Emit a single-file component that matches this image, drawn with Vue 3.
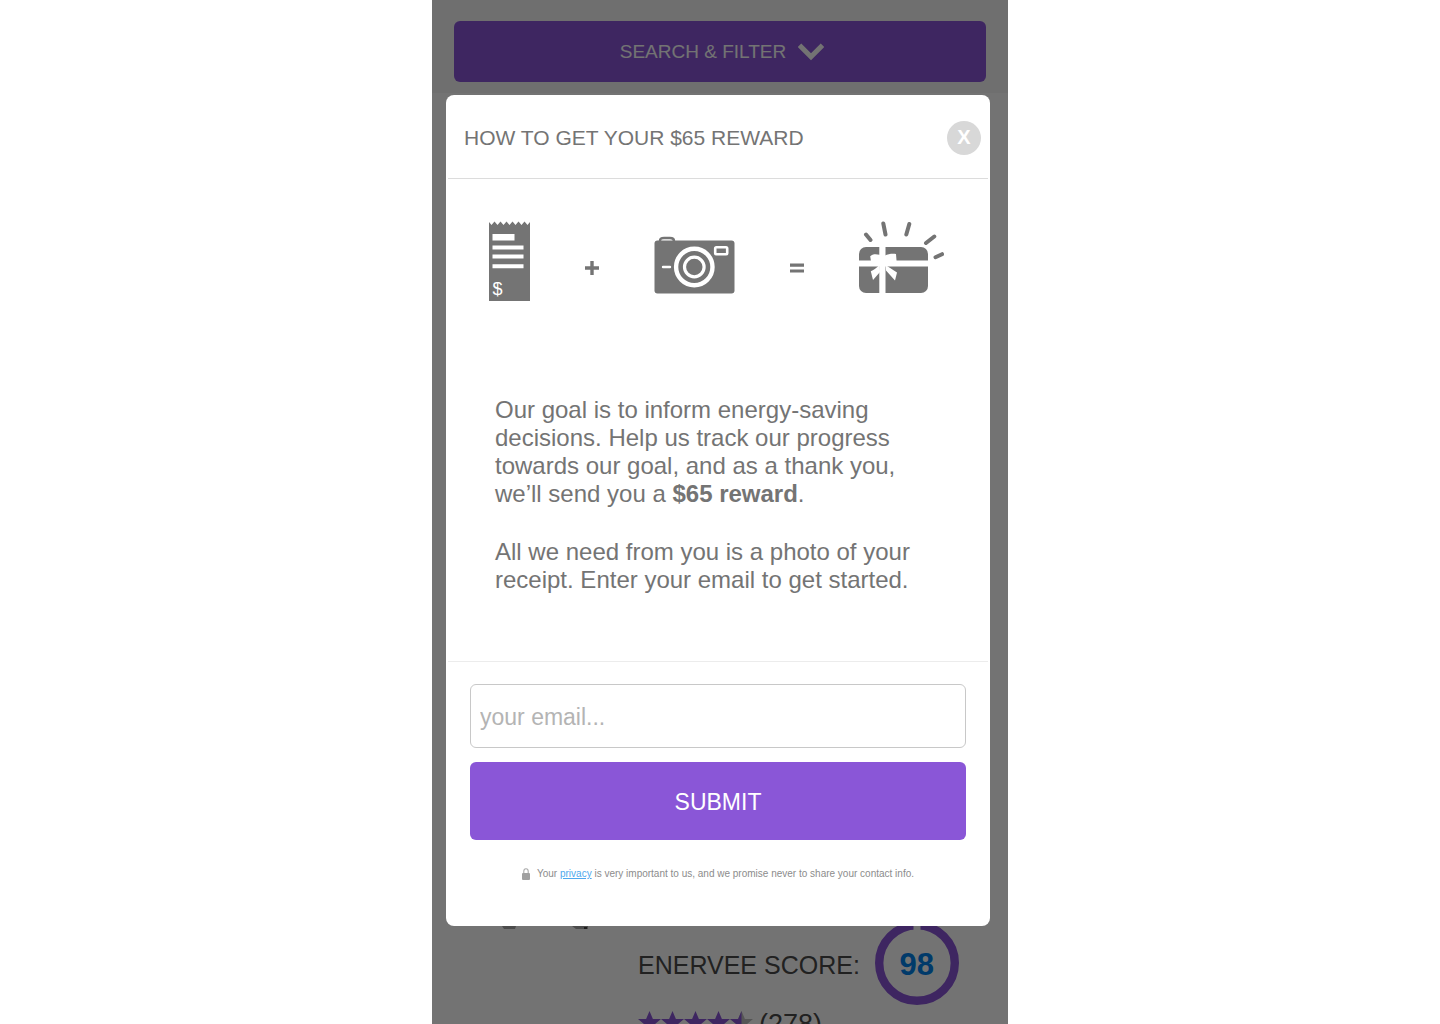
<template>
  <div class="page">
    <header class="filter-bar">
      <button type="button" class="filter-btn">
        SEARCH &amp; FILTER
        <svg class="chevron" viewBox="0 0 26 18" aria-hidden="true">
          <path d="M1.5 2.2L13 13.8L24.5 2.2" fill="none" stroke="currentColor" stroke-width="5" />
        </svg>
      </button>
    </header>

    <main class="product">
      <svg class="product-img" viewBox="0 0 90 120" aria-hidden="true">
        <rect x="2" y="0" width="86" height="117" fill="#fff" />
        <path d="M2 116h14l-1 3H4zM72 116h16v3h-12z" fill="#a8a8a8" />
        <path d="M84 117h3v2h-3z" fill="#444" />
      </svg>
      <div class="product-info">
        <div class="score">
          <span>ENERVEE SCORE:</span>
          <div class="ring">
            <svg viewBox="0 0 84 84" aria-hidden="true">
              <circle cx="42" cy="42" r="37.8" fill="none" stroke="#8a56d7" stroke-width="8.4" />
              <path d="M38.5 0h7v10h-7z" fill="#fff" />
            </svg>
            <strong>98</strong>
          </div>
        </div>
        <div class="rating">
          <svg class="stars" viewBox="0 0 115 22" aria-hidden="true">
            <path v-for="n in 4" :key="n" :d="star" :transform="`translate(${(n - 1) * 23} 0)`" fill="#8a56d7" />
            <g transform="translate(92 0)">
              <path :d="star" fill="#bdbdbd" />
              <path d="M11.5 0V17.4L4.4 22L6.7 13.4L0 8H8.1z" fill="#8a56d7" />
            </g>
          </svg>
          <span>(278)</span>
        </div>
      </div>
    </main>

    <div class="overlay"></div>

    <section v-if="open" class="modal" role="dialog" aria-labelledby="modal-title">
      <div class="modal-head">
        <h1 id="modal-title">HOW TO GET YOUR $65 REWARD</h1>
        <button type="button" class="close" aria-label="Close" @click="open = false">X</button>
      </div>

      <div class="modal-body">
        <div class="steps">
          <svg class="receipt" viewBox="0 0 41 80" aria-hidden="true">
            <path d="M0 1l2.5 3 3-3.4 3 3.4 3-3.4 3 3.4 3-3.4 3 3.4 3-3.4 3 3.4 3-3.4 3 3.4 3-3.4 3 3.4L41 1V80H0z" fill="#747474" />
            <path d="M3.5 13h22v6.5h-22zM3.5 24.4h31v4h-31zM3.5 33.4h31v4h-31zM3.5 43.3h31v4h-31z" fill="#fff" />
            <text x="3.5" y="74" font-size="18" fill="#fff">$</text>
          </svg>
          <svg class="sign" viewBox="0 0 14 14" aria-hidden="true">
            <path d="M7 0V14M0 7H14" stroke="#747474" stroke-width="3.4" />
          </svg>
          <svg class="camera" viewBox="0 0 81 58" aria-hidden="true">
            <path d="M6 5C6 2.4 8 2 10 2h6C18 2 20 2.4 20 5" fill="none" stroke="#747474" stroke-width="2.4" />
            <rect x="0.5" y="4.5" width="80" height="53" rx="3" fill="#747474" />
            <g fill="none" stroke="#fff">
              <circle cx="40.3" cy="31" r="18.2" stroke-width="4.4" />
              <circle cx="40.3" cy="31" r="9.8" stroke-width="3.2" />
              <rect x="61.2" y="11.2" width="12" height="7" rx="1.2" stroke-width="2.6" />
              <path d="M9 31h7" stroke-width="2.4" stroke-linecap="round" />
            </g>
          </svg>
          <svg class="sign" viewBox="0 0 14 14" aria-hidden="true">
            <path d="M0 4.2H14M0 10H14" stroke="#747474" stroke-width="3.2" />
          </svg>
          <svg class="gift" viewBox="0 0 86 73" aria-hidden="true">
            <g stroke="#747474" stroke-width="4" stroke-linecap="round">
              <path d="M7 13.5l4.5 5.5M24.3 2.5l2.2 11M50.3 3L47.3 13.5M75.3 15.5L67 22M83 33.2L76.5 36.2" />
            </g>
            <rect x="0" y="26" width="69" height="46" rx="7" fill="#747474" />
            <g fill="#fff">
              <path d="M20.3 26h6.2v46h-6.2zM0 39.6h69v6H0z" />
              <path d="M20.5 33.8C17 32.6 13 33 11.2 35.2L12 40.5H37.6L37 33C33 32.6 29 33 26 34.6z" />
              <path d="M20.5 44C17 47.5 14.5 49 11.8 50.2L14 59L21 51zM26.5 44L38 51.4L36 59.5L27 49.4z" />
            </g>
          </svg>
        </div>

        <div class="copy">
          <p>Our goal is to inform energy-saving decisions. Help us track our progress towards our goal, and as a thank you, we’ll send you a <strong>$65 reward</strong>.</p>
          <p>All we need from you is a photo of your receipt. Enter your email to get started.</p>
        </div>
      </div>

      <form class="modal-form" @submit.prevent>
        <input v-model="email" type="email" placeholder="your email..." aria-label="your email">
        <button type="submit" class="submit">SUBMIT</button>
        <p class="privacy">
          <svg class="lock" viewBox="0 0 8 12" aria-hidden="true">
            <path d="M1.8 6V3.2a2.2 2.4 0 0 1 4.4 0V6" fill="none" stroke="#a9a9a9" stroke-width="1.1" />
            <rect y="5" width="8" height="7" rx="1" fill="#a0a0a0" />
          </svg>
          <span>Your <a href="#">privacy</a> is very important to us, and we promise never to share your contact info.</span>
        </p>
      </form>
    </section>
  </div>
</template>

<script setup>
import { ref } from 'vue'

const open = ref(true)
const email = ref('')

const star = 'M11.5 0L14.9 8H23L16.6 13.4L18.6 22L11.5 17.4L4.4 22L6.4 13.4L0 8H8.1z'
</script>

<style>
body {
  margin: 0;
  background: #fff;
}
</style>

<style scoped>
* {
  box-sizing: border-box;
}

.page {
  position: relative;
  max-width: 576px;
  height: 100vh;
  margin: 0 auto;
  overflow: hidden;
  background: #fff;
  color: #4a4a4a;
  font-family: "Liberation Sans", Arial, sans-serif;
}

button,
input {
  font-family: inherit;
}

.filter-bar {
  padding: 21px 22px 11px;
  background: #f7f7f7;
}

.filter-btn {
  display: flex;
  align-items: center;
  justify-content: center;
  gap: 12px;
  width: 100%;
  height: 61px;
  padding: 0 0 0 4px;
  border: 0;
  border-radius: 6px;
  background: #8a56d7;
  color: #fff;
  font-size: 19px;
}

.chevron {
  width: 26px;
  height: 18px;
}

.product {
  display: flex;
  gap: 48px;
  padding: 717px 22px 0 68px;
}

.product-img {
  width: 90px;
  height: 120px;
}

.product-info {
  padding-top: 111px;
}

.score {
  display: flex;
  align-items: center;
  gap: 15px;
  font-size: 25px;
  line-height: 30px;
}

.score span,
.score strong {
  padding-top: 3px;
}

.ring {
  display: grid;
  width: 84px;
  height: 84px;
  place-items: center;
}

.ring svg,
.ring strong {
  grid-area: 1 / 1;
}

.ring strong {
  color: #0082ec;
  font-size: 31px;
}

.rating {
  display: flex;
  gap: 6px;
  padding-top: 6px;
  font-size: 27px;
  line-height: 26px;
}

.stars {
  width: 115px;
  height: 22px;
}

.overlay {
  position: absolute;
  inset: 0;
  background: rgba(0, 0, 0, 0.55);
}

.modal {
  position: absolute;
  top: 95px;
  left: 14px;
  right: 18px;
  padding: 0 2px;
  border-radius: 8px;
  background: #fff;
  color: #747474;
}

.modal-head {
  display: flex;
  align-items: center;
  justify-content: space-between;
  height: 84px;
  padding: 2px 7px 0 16px;
  border-bottom: 1px solid #dcdcdc;
}

.modal-head h1 {
  margin: 0;
  font-size: 21px;
  font-weight: normal;
}

.close {
  width: 34px;
  height: 34px;
  padding: 0;
  border: 0;
  border-radius: 50%;
  background: #d8d8d8;
  color: #fff;
  font-size: 20px;
  font-weight: bold;
}

.modal-body {
  padding: 42px 43px 67px 41px;
  border-bottom: 1px solid #ececec;
}

.steps {
  display: flex;
  align-items: flex-end;
  justify-content: space-between;
  height: 80px;
}

.steps text {
  font-family: "Liberation Sans", Arial, sans-serif;
}

.receipt {
  width: 41px;
  height: 80px;
}

.sign {
  width: 14px;
  height: 14px;
  margin-bottom: 26px;
}

.camera {
  width: 81px;
  height: 58px;
  margin-bottom: 7px;
}

.gift {
  width: 86px;
  height: 73px;
  margin-bottom: 7px;
}

.copy {
  padding: 95px 22px 0 6px;
  font-size: 24px;
  line-height: 28px;
}

.copy p {
  margin: 0;
}

.copy p + p {
  margin-top: 30px;
}

.modal-form {
  padding: 22px 22px 45px;
}

.modal-form input {
  display: block;
  width: 100%;
  height: 64px;
  padding: 2px 9px 0;
  border: 1px solid #c8c8c8;
  border-radius: 6px;
  color: #747474;
  font-size: 23px;
}

.modal-form input::placeholder {
  color: #b4b4b4;
}

.submit {
  display: block;
  width: 100%;
  height: 78px;
  margin-top: 14px;
  padding: 2px 0 0;
  border: 0;
  border-radius: 6px;
  background: #8a56d7;
  color: #fff;
  font-size: 23px;
}

.privacy {
  display: flex;
  align-items: center;
  justify-content: center;
  gap: 7px;
  margin: 27px 0 0;
  color: #8c8c8c;
  font-size: 10px;
  line-height: 14px;
}

.lock {
  width: 8px;
  height: 12px;
}

.privacy a {
  color: #4fa9ee;
}
</style>
